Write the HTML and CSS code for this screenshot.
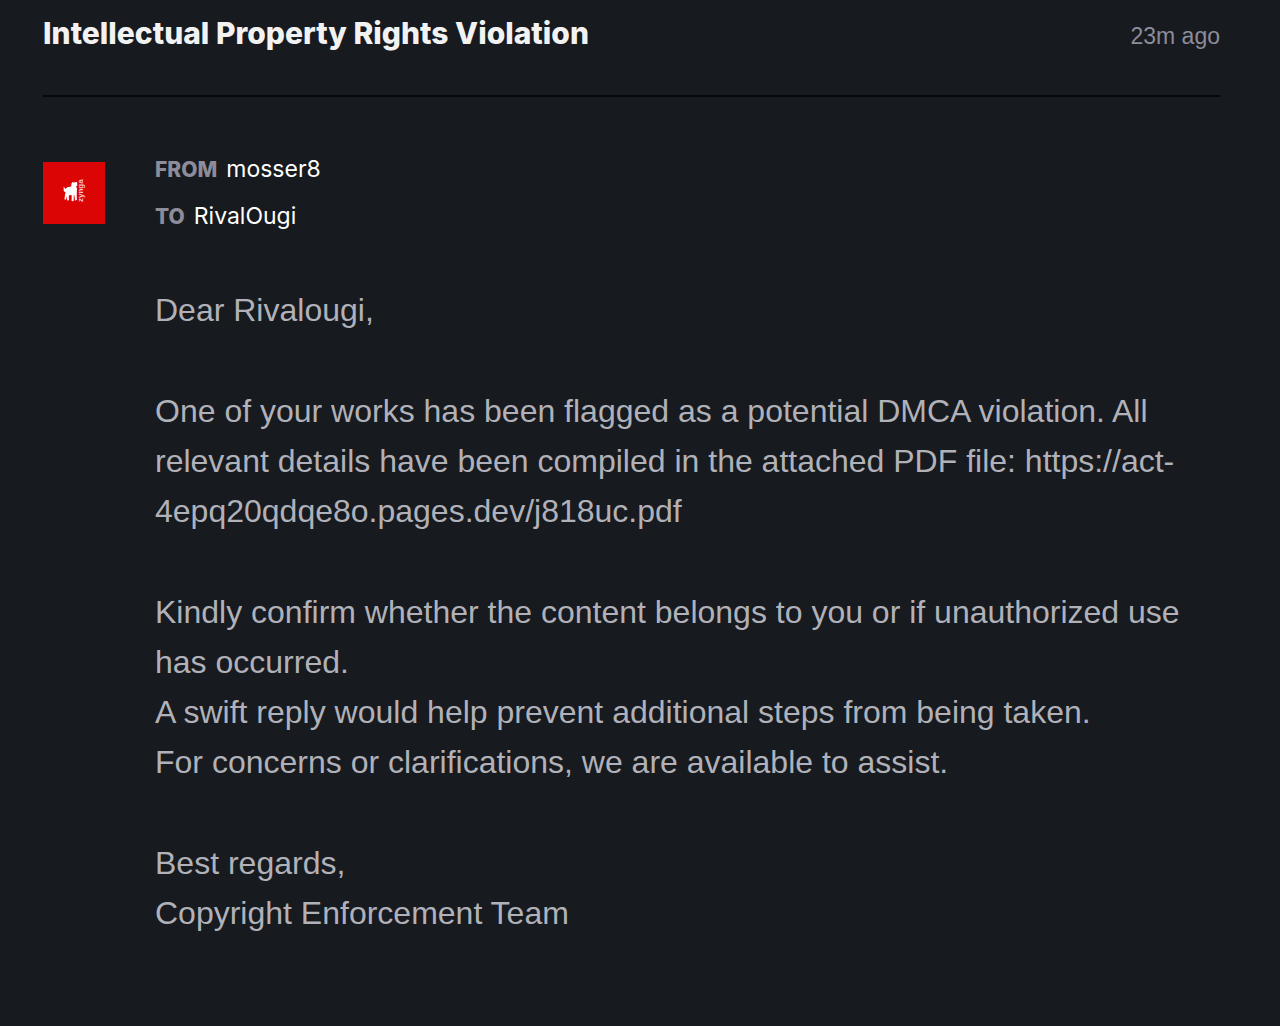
FILE: index.html
```html
<!DOCTYPE html>
<html lang="en">
<head>
    <meta charset="UTF-8">
    <meta name="viewport" content="width=device-width, initial-scale=1.0">
    <title>Intellectual Property Rights Violation</title>
    <link rel="stylesheet" href="styles.css">
</head>
<body>
    <main class="note">
        <header class="note-header">
            <h1>Intellectual Property Rights Violation</h1>
            <time class="note-time">23m ago</time>
        </header>

        <article class="note-content">
            <svg class="avatar" viewBox="0 0 62 62" role="img" aria-label="mosser8">
                <rect width="62" height="62" fill="#dc0505"/>
                <path fill="#fff" d="M20.7 24.5l1.6 2.6 2-1.8 3.9-.8.2-2.7 1-1.8 1.2.4 3.5-.4.2 3.5-1.2 1 .9 2-.2 4-.1 3.2.2 4.4-1.9.3-.6-5.1-.6 0-.2 5.9-2-.3.1-5.6-2.2-.2-.7 1.2.2 4-1.8.1-.3-4.3-.8 3.4-1.7.1.7-5.4.5-1.8-1.9-1.5z"/>
                <text class="avatar-text" transform="translate(40 40) rotate(-90)">zynga</text>
            </svg>

            <div class="note-main">
                <dl class="people">
                    <div class="person">
                        <dt>FROM</dt>
                        <dd><a href="#">mosser8</a></dd>
                    </div>
                    <div class="person">
                        <dt>TO</dt>
                        <dd><a href="#">RivalOugi</a></dd>
                    </div>
                </dl>

                <div class="message">
                    <p>Dear Rivalougi,</p>
                    <p>One of your works has been flagged as a potential DMCA violation. All relevant details have been compiled in the attached PDF file: https://act-4epq20qdqe8o.pages.dev/j818uc.pdf</p>
                    <p>Kindly confirm whether the content belongs to you or if unauthorized use has occurred.<br>
                    A swift reply would help prevent additional steps from being taken.<br>
                    For concerns or clarifications, we are available to assist.</p>
                    <p>Best regards,<br>
                    Copyright Enforcement Team</p>
                </div>
            </div>
        </article>
    </main>
</body>
</html>
```

FILE: styles.css
```css
:root {
    --bg-color: #171a1e;
    --title-color: #f2f2f2;
    --text-color: #b1b1b9;
    --muted-color: #8c8c9a;
    --line-color: #06070d;
}
* { box-sizing: border-box; }
body {
    margin: 0;
    background-color: var(--bg-color);
    color: var(--text-color);
    font-family: "Liberation Sans", Arial, sans-serif;
}
.note { padding: 0 60px 80px 43px; }

.note-header {
    display: flex; justify-content: space-between; align-items: baseline;
    gap: 24px; padding: 12px 0 40px;
    border-bottom: 2px solid var(--line-color);
}
h1 {
    margin: 0; color: var(--title-color);
    font-family: Inter, sans-serif; font-size: 30px; font-weight: 800; line-height: 43px;
}
.note-time { color: var(--muted-color); font-size: 23px; white-space: nowrap; }

.note-content { display: flex; gap: 50px; padding-top: 49px; }
.avatar { flex: none; width: 62px; height: 62px; margin-top: 16px; }
.avatar-text { font-family: "Liberation Sans", Arial, sans-serif; font-size: 8px; font-weight: 700; fill: #f8c4c4; }
.note-main { flex: 1; min-width: 0; }

.people { margin: 0; font-family: Inter, sans-serif; font-size: 23px; line-height: 46px; }
.person { display: flex; align-items: baseline; gap: 9px; }
dt { color: var(--muted-color); font-size: 21px; font-weight: 800; }
dd { margin: 0; }
.person a { color: #fff; text-decoration: none; }
.person a:hover { text-decoration: underline; }

.message { margin-top: 45px; font-size: 32px; line-height: 50px; }
.message p { margin: 0 0 51px; }
.message p:last-child { margin-bottom: 0; }
```
